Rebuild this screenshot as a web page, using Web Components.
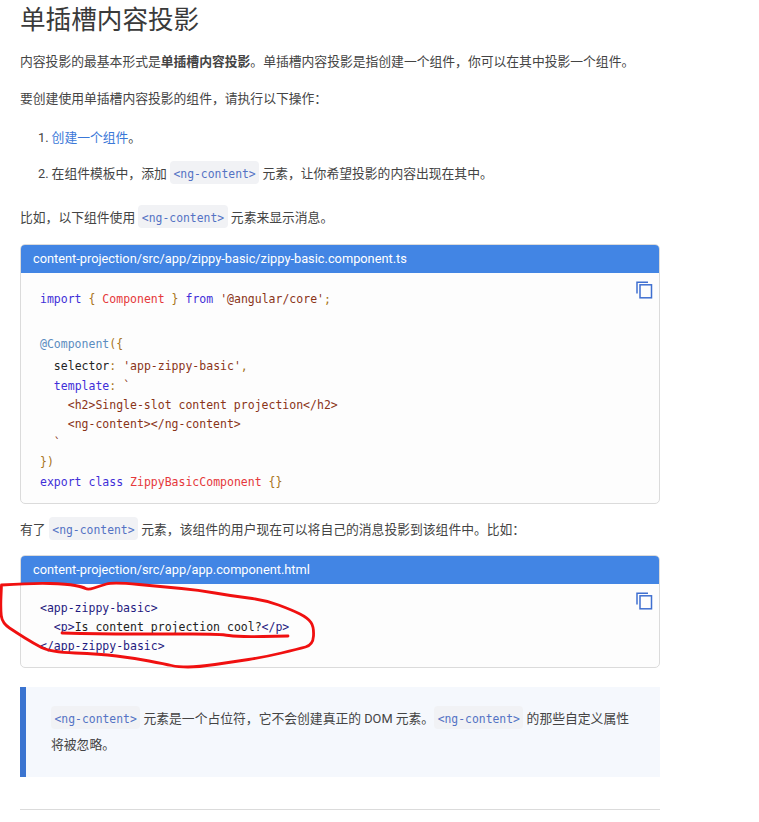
<!DOCTYPE html>
<html lang="zh">
<head>
<meta charset="utf-8">
<title>单插槽内容投影</title>
<style>
  html, body { margin: 0; background: #fff; }
  body { font: 12.8px/20px Roboto, "Noto Sans CJK SC", sans-serif; color: #444; }
  a { color: #3b78d8; text-decoration: none; }
</style>
</head>
<body>
<doc-page>
  <doc-title>单插槽内容投影</doc-title>
  <doc-para top="12">内容投影的最基本形式是<b>单插槽内容投影</b>。单插槽内容投影是指创建一个组件，你可以在其中投影一个组件。</doc-para>
  <doc-para top="17">要创建使用单插槽内容投影的组件，请执行以下操作：</doc-para>
  <doc-step n="1" top="19"><a href="#">创建一个组件</a>。</doc-step>
  <doc-step n="2" top="16">在组件模板中，添加 <code-chip>&lt;ng-content&gt;</code-chip> 元素，让你希望投影的内容出现在其中。</doc-step>
  <doc-para top="24">比如，以下组件使用 <code-chip>&lt;ng-content&gt;</code-chip> 元素来显示消息。</doc-para>

  <code-card top="16" pad="14" bottom="11" title="content-projection/src/app/zippy-basic/zippy-basic.component.ts">
    <code-line h="24"><span class="kwd">import</span> <span class="pun">{</span> <span class="typ">Component</span> <span class="pun">}</span> <span class="kwd">from</span> <span class="str">'@angular/core'</span><span class="pun">;</span></code-line>
    <code-line h="24"></code-line>
    <code-line h="22" lh="19"><span class="lit">@Component</span><span class="pun">({</span></code-line>
    <code-line h="20" lh="19">  <span class="pln">selector</span><span class="pun">:</span> <span class="str">'app-zippy-basic'</span><span class="pun">,</span></code-line>
    <code-line>  <span class="kwd">template</span><span class="pun">:</span> <span class="str">`</span></code-line>
    <code-line>    <span class="str">&lt;h2&gt;Single-slot content projection&lt;/h2&gt;</span></code-line>
    <code-line>    <span class="str">&lt;ng-content&gt;&lt;/ng-content&gt;</span></code-line>
    <code-line>  <span class="str">`</span></code-line>
    <code-line h="20" lh="19"><span class="pun">})</span></code-line>
    <code-line><span class="kwd">export</span> <span class="kwd">class</span> <span class="typ">ZippyBasicComponent</span> <span class="pun">{}</span></code-line>
  </code-card>

  <doc-para top="16">有了 <code-chip>&lt;ng-content&gt;</code-chip> 元素，该组件的用户现在可以将自己的消息投影到该组件中。比如：</doc-para>

  <code-card top="15" pad="15" bottom="11" title="content-projection/src/app/app.component.html">
    <code-line><span class="tag">&lt;app-zippy-basic&gt;</span></code-line>
    <code-line>  <span class="tag">&lt;p&gt;</span><span class="pln">Is content projection cool?</span><span class="tag">&lt;/p&gt;</span></code-line>
    <code-line><span class="tag">&lt;/app-zippy-basic&gt;</span></code-line>
  </code-card>

  <doc-callout>
    <code-chip>&lt;ng-content&gt;</code-chip> 元素是一个占位符，它不会创建真正的 DOM 元素。<code-chip>&lt;ng-content&gt;</code-chip> 的那些自定义属性
    <div>将被忽略。</div>
  </doc-callout>
  <doc-rule></doc-rule>
  <red-scribble></red-scribble>
</doc-page>

<script>
class DocPage extends HTMLElement {
  constructor() {
    super();
    this.attachShadow({ mode: "open" });
    this.shadowRoot.innerHTML = `
      <style>
        :host { display: block; position: relative; width: 640px; padding: 0 0 0 20px; }
      </style>
      <slot></slot>`;
  }
}

class DocTitle extends HTMLElement {
  constructor() {
    super();
    this.attachShadow({ mode: "open" });
    this.shadowRoot.innerHTML = `
      <style>
        :host { display: block; font-size: 25.6px; line-height: 40px; color: #3a3a3a; }
      </style>
      <slot></slot>`;
  }
}

class DocPara extends HTMLElement {
  constructor() {
    super();
    this.attachShadow({ mode: "open" });
    this.shadowRoot.innerHTML = `
      <style>
        :host { display: block; }
      </style>
      <slot></slot>`;
  }
  connectedCallback() {
    this.style.marginTop = (this.getAttribute("top") || 0) + "px";
  }
}

class DocStep extends HTMLElement {
  constructor() {
    super();
    this.attachShadow({ mode: "open" });
    this.shadowRoot.innerHTML = `
      <style>
        :host { display: flex; align-items: baseline; gap: 3px; padding-left: 18px; }
      </style>
      <span id="n"></span>
      <div><slot></slot></div>`;
  }
  connectedCallback() {
    this.shadowRoot.getElementById("n").textContent = this.getAttribute("n") + ".";
    this.style.marginTop = (this.getAttribute("top") || 0) + "px";
  }
}

class CodeChip extends HTMLElement {
  constructor() {
    super();
    this.attachShadow({ mode: "open" });
    // host is inline: whitespace round the slot would show as a space
    this.shadowRoot.innerHTML = `<style>
        :host {
          display: inline;
          padding: 5.9px 3.5px 2.8px;
          font-family: "DejaVu Sans Mono", monospace;
          font-size: 11.4px;
          color: #5472c4;
          background: #f1f2f5;
          border-radius: 4px;
        }
      </style><slot></slot>`;
  }
}

class CodeCard extends HTMLElement {
  constructor() {
    super();
    this.attachShadow({ mode: "open" });
    this.shadowRoot.innerHTML = `
      <style>
        :host {
          display: block;
          position: relative;
          box-sizing: border-box;
          border: 1px solid #dbdbdb;
          border-radius: 5px;
          background: #fdfdfd;
          overflow: hidden;
        }
        header {
          background: #4285e4;
          color: #fff;
          font: 12.8px/28px Roboto, sans-serif;
          padding: 0 12px;
        }
        .body { padding: 14px 19px 0; }
        svg { position: absolute; top: 36px; right: 6px; }
      </style>
      <header id="t"></header>
      <div class="body"><slot></slot></div>
      <svg width="17" height="18" viewBox="0 0 17 18" fill="none" stroke="#3f6fd0" stroke-width="1.5">
        <path d="M1 12.5V1.2H12"/>
        <rect x="4" y="3.8" width="11.5" height="13"/>
      </svg>`;
  }
  connectedCallback() {
    this.shadowRoot.getElementById("t").textContent = this.getAttribute("title");
    this.removeAttribute("title");
    this.style.marginTop = (this.getAttribute("top") || 0) + "px";
    const body = this.shadowRoot.querySelector(".body");
    body.style.paddingTop = (this.getAttribute("pad") || 14) + "px";
    body.style.paddingBottom = (this.getAttribute("bottom") || 0) + "px";
  }
}

class CodeLine extends HTMLElement {
  constructor() {
    super();
    this.attachShadow({ mode: "open" });
    // no whitespace round the slot: the host is white-space: pre
    this.shadowRoot.innerHTML = `<style>
        :host {
          display: block;
          height: 19px;
          white-space: pre;
          font: 11.5px/19px "DejaVu Sans Mono", monospace;
          color: #222;
        }
        ::slotted(.kwd) { color: #3f2fd8; }
        ::slotted(.typ) { color: #e5383b; }
        ::slotted(.pun) { color: #a8741a; }
        ::slotted(.str) { color: #8a3418; }
        ::slotted(.lit) { color: #5b8cc0; }
        ::slotted(.pln) { color: #222; }
        ::slotted(.tag) { color: #1f1a80; }
      </style><slot></slot>`;
  }
  connectedCallback() {
    if (this.hasAttribute("h")) {
      this.style.height = this.getAttribute("h") + "px";
      this.style.lineHeight = (this.getAttribute("lh") || this.getAttribute("h")) + "px";
    }
  }
}

class DocCallout extends HTMLElement {
  constructor() {
    super();
    this.attachShadow({ mode: "open" });
    this.shadowRoot.innerHTML = `
      <style>
        :host {
          display: block;
          box-sizing: border-box;
          margin-top: 19px;
          height: 90px;
          padding: 19px 26px 0 25px;
          background: #f5f8fd;
          border-left: 6px solid #3b74d0;
          line-height: 26px;
        }
      </style>
      <slot></slot>`;
  }
}

class DocRule extends HTMLElement {
  constructor() {
    super();
    this.attachShadow({ mode: "open" });
    this.shadowRoot.innerHTML = `
      <style>
        :host { display: block; margin-top: 32px; border-top: 1px solid #dbdbdb; height: 12px; }
      </style>`;
  }
}

// hand drawn marks, traced from the picture: points are page coordinates
const smooth = (pts) => {
  let d = `M${pts[0][0]} ${pts[0][1]}`;
  for (let i = 1; i < pts.length - 1; i++) {
    const mx = (pts[i][0] + pts[i + 1][0]) / 2;
    const my = (pts[i][1] + pts[i + 1][1]) / 2;
    d += `Q${pts[i][0]} ${pts[i][1]} ${mx} ${my}`;
  }
  const last = pts[pts.length - 1];
  return d + `L${last[0]} ${last[1]}`;
};
const ring = [[1.5, 585], [33, 583], [67, 584], [83, 587], [88, 590], [100, 586], [113, 582], [165, 587],
  [198, 590], [232, 596], [265, 600], [292, 610], [308, 618], [314, 627], [313, 645], [298, 649],
  [265, 657], [232, 662], [198, 667], [178, 667], [165, 664], [133, 658], [100, 654], [50, 652],
  [33, 643], [17, 633], [2, 623], [0.5, 608], [1.5, 585]];
const underline = [[62, 633], [100, 634], [165, 634], [220, 634], [238, 637], [288, 636]];

class RedScribble extends HTMLElement {
  constructor() {
    super();
    this.attachShadow({ mode: "open" });
    this.shadowRoot.innerHTML = `
      <style>
        :host { position: absolute; left: 0; top: 575px; width: 330px; height: 100px; pointer-events: none; }
        svg { display: block; }
      </style>
      <svg width="330" height="100" viewBox="0 575 330 100" fill="none" stroke="#f01010" stroke-width="2.8" stroke-linecap="round" stroke-linejoin="round">
        <path d="${smooth(ring)}"/>
        <path d="${smooth(underline)}"/>
      </svg>`;
  }
}

customElements.define("doc-page", DocPage);
customElements.define("doc-title", DocTitle);
customElements.define("doc-para", DocPara);
customElements.define("doc-step", DocStep);
customElements.define("code-chip", CodeChip);
customElements.define("code-card", CodeCard);
customElements.define("code-line", CodeLine);
customElements.define("doc-callout", DocCallout);
customElements.define("doc-rule", DocRule);
customElements.define("red-scribble", RedScribble);
</script>
</body>
</html>
